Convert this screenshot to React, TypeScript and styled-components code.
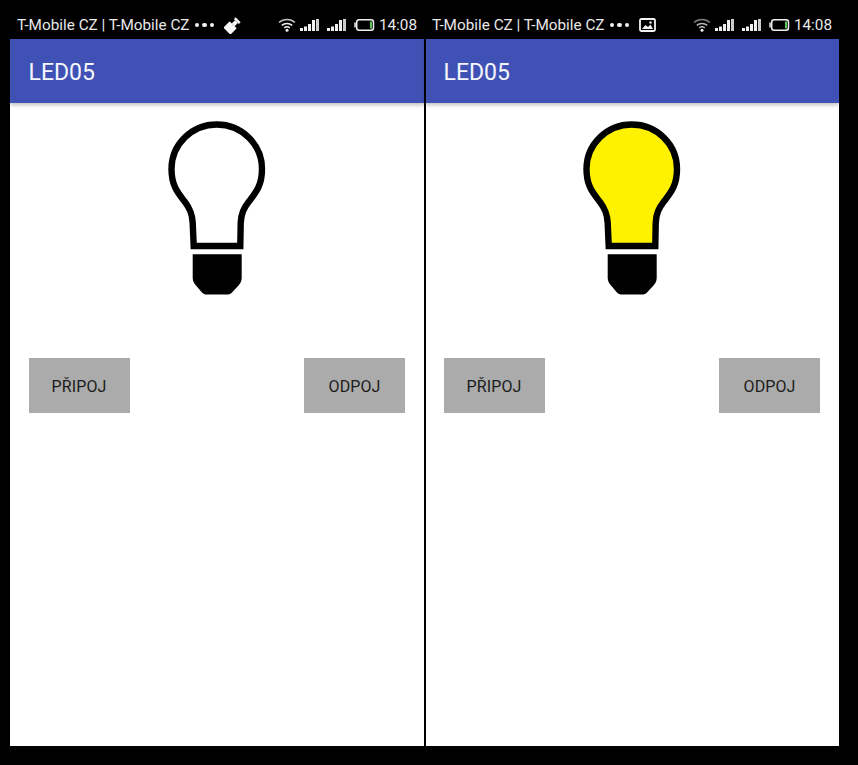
import React from "react";
import styled, { createGlobalStyle } from "styled-components";

const GlobalStyle = createGlobalStyle`
  html, body {
    margin: 0;
    padding: 0;
    background: #000;
  }
`;

const Page = styled.div`
  display: flex;
  gap: 1px;
  width: 858px;
  height: 765px;
  padding: 0 0 19px 10px;
  box-sizing: border-box;
  background: #000;
  font-family: Roboto, "Liberation Sans", sans-serif;
  overflow: hidden;
`;

const Phone = styled.div`
  position: relative;
  display: flex;
  flex-direction: column;
  width: 414px;

  & + &::before {
    content: "";
    position: absolute;
    z-index: 1;
    top: 39px;
    bottom: 0;
    left: 0;
    width: 1px;
    background: #000;
  }
`;

const StatusBar = styled.div`
  display: flex;
  align-items: center;
  flex: none;
  height: 28px;
  padding: 11px 7px 0;
  color: #e8e8e8;
  font-size: 15.3px;
`;

const Carrier = styled.span`
  white-space: nowrap;
`;

const Dots = styled.span`
  display: flex;
  gap: 3px;
  margin-left: 5px;
`;

const Dot = styled.i`
  width: 4.5px;
  height: 4.5px;
  border-radius: 50%;
  background: #f2f2f2;
`;

const NoticeIcon = styled.svg`
  display: block;
  margin-left: 10px;
`;

const StatusRight = styled.div`
  display: flex;
  align-items: center;
  margin-left: auto;
`;

const Glyph = styled.svg<{ $gap: number }>`
  display: block;
  margin-left: ${(p) => p.$gap}px;
`;

const Clock = styled.span`
  margin-left: 4px;
`;

const AppBar = styled.header`
  position: relative;
  display: flex;
  align-items: center;
  flex: none;
  box-sizing: border-box;
  height: 64px;
  padding: 3px 0 0 18.5px;
  background: #3f51b5;
  color: #f5f6fb;
  font-size: 23px;
  box-shadow: 0 2px 4px rgba(0, 0, 0, 0.25);
`;

const Content = styled.main`
  flex: 1;
  padding: 18px 19px 0 18.5px;
  background: #fff;
`;

const BulbWrap = styled.div`
  display: flex;
  justify-content: center;
`;

const Buttons = styled.div`
  display: flex;
  justify-content: space-between;
  margin-top: 63px;
`;

const Button = styled.button`
  width: 101px;
  height: 55px;
  padding: 2px 0 0;
  border: 0;
  border-radius: 0;
  background: #ababab;
  color: #1c1c1c;
  font: 400 16px Roboto, "Liberation Sans", sans-serif;
  letter-spacing: 0.1px;
`;

const Wifi = ({ dim }: { dim: boolean }) => (
  <Glyph $gap={0} width="18" height="14" viewBox="0 0 18 14">
    <g fill="none" stroke={dim ? "#b5b5b5" : "#f0f0f0"} strokeWidth="1.5">
      <path d="M1 4.500C5.500 0.500 12.500 0.500 17 4.500" opacity={dim ? 0.7 : 0.8} />
      <path d="M3.800 7.300C6.800 4.800 11.200 4.800 14.200 7.300" />
      <path d="M6.200 9.800C7.900 8.500 10.100 8.500 11.800 9.800" />
    </g>
    <circle cx="9" cy="12.300" r="1.500" fill="#f0f0f0" />
  </Glyph>
);

const Bars = ({ gap }: { gap: number }) => (
  <Glyph $gap={gap} width="19" height="12" viewBox="0 0 19 12">
    <g fill="#f0f0f0">
      <rect x="0" y="9" width="3" height="3" />
      <rect x="4" y="7.500" width="3" height="4.500" />
      <rect x="8" y="5" width="3" height="7" />
      <rect x="12" y="1" width="3" height="11" />
      <rect x="16" y="0" width="3" height="12" opacity="0.85" />
    </g>
  </Glyph>
);

const Battery = () => (
  <Glyph $gap={8} width="21" height="12" viewBox="0 0 21 12">
    <rect x="2.700" y="0.800" width="16.800" height="10.400" rx="2.500" fill="none" stroke="#f0f0f0" strokeWidth="1.500" />
    <rect x="0.300" y="3.500" width="1.500" height="5" fill="#f0f0f0" />
    <rect x="16" y="2.500" width="2" height="7" fill="#5fc45a" />
  </Glyph>
);

const Flashlight = () => (
  <NoticeIcon width="17" height="17" viewBox="0 0 17 17">
    <g fill="#f6f6f6" transform="rotate(45 8.500 8.500)">
      <rect x="3.500" y="7.500" width="10" height="9" rx="1" />
      <rect x="5" y="0.500" width="7" height="2.500" />
      <rect x="6.500" y="3" width="4" height="4.500" />
    </g>
  </NoticeIcon>
);

const PictureIcon = () => (
  <NoticeIcon width="17" height="14" viewBox="0 0 17 14">
    <rect x="1" y="1" width="15" height="12" rx="1.500" fill="none" stroke="#f4f4f4" strokeWidth="1.800" />
    <path d="M3 11L6.500 7L9 9L11.500 6.500L14 11Z" fill="#f4f4f4" />
    <circle cx="11.500" cy="4.500" r="1.200" fill="#f4f4f4" />
  </NoticeIcon>
);

const Bulb = ({ lit }: { lit: boolean }) => (
  <svg width="98" height="174" viewBox="0 0 98 174">
    <path
      d="M25.700 125L24.700 102C24.200 92 21.500 87 17 81C10 72 3.500 65 3.500 48A45.200 44.500 0 0 1 94 48C94 65 87.500 72 80.500 81C76 87 73.200 92 72.700 102L72.300 125Z"
      fill={lit ? "#fff200" : "#fff"}
      stroke="#000"
      strokeWidth="6.400"
      strokeLinejoin="miter"
    />
    <path
      d="M24.700 133.300H73.700V157C73.700 160 72.500 162 70.500 164.500L64 171.500C62.500 173 61 173.500 59 173.500H39C37 173.500 35.500 173 34 171.500L28 164.500C25.900 162 24.700 160 24.700 157Z"
      fill="#000"
    />
  </svg>
);

const screens = [
  { id: "off", lit: false, icon: <Flashlight />, dimWifi: false },
  { id: "on", lit: true, icon: <PictureIcon />, dimWifi: true },
];

const App = () => (
  <Page>
    <GlobalStyle />
    {screens.map((s) => (
      <Phone key={s.id}>
        <StatusBar>
          <Carrier>T-Mobile CZ | T-Mobile CZ</Carrier>
          <Dots>
            <Dot />
            <Dot />
            <Dot />
          </Dots>
          {s.icon}
          <StatusRight>
            <Wifi dim={s.dimWifi} />
            <Bars gap={4} />
            <Bars gap={8} />
            <Battery />
            <Clock>14:08</Clock>
          </StatusRight>
        </StatusBar>
        <AppBar>LED05</AppBar>
        <Content>
          <BulbWrap>
            <Bulb lit={s.lit} />
          </BulbWrap>
          <Buttons>
            <Button>PŘIPOJ</Button>
            <Button>ODPOJ</Button>
          </Buttons>
        </Content>
      </Phone>
    ))}
  </Page>
);

export default App;
